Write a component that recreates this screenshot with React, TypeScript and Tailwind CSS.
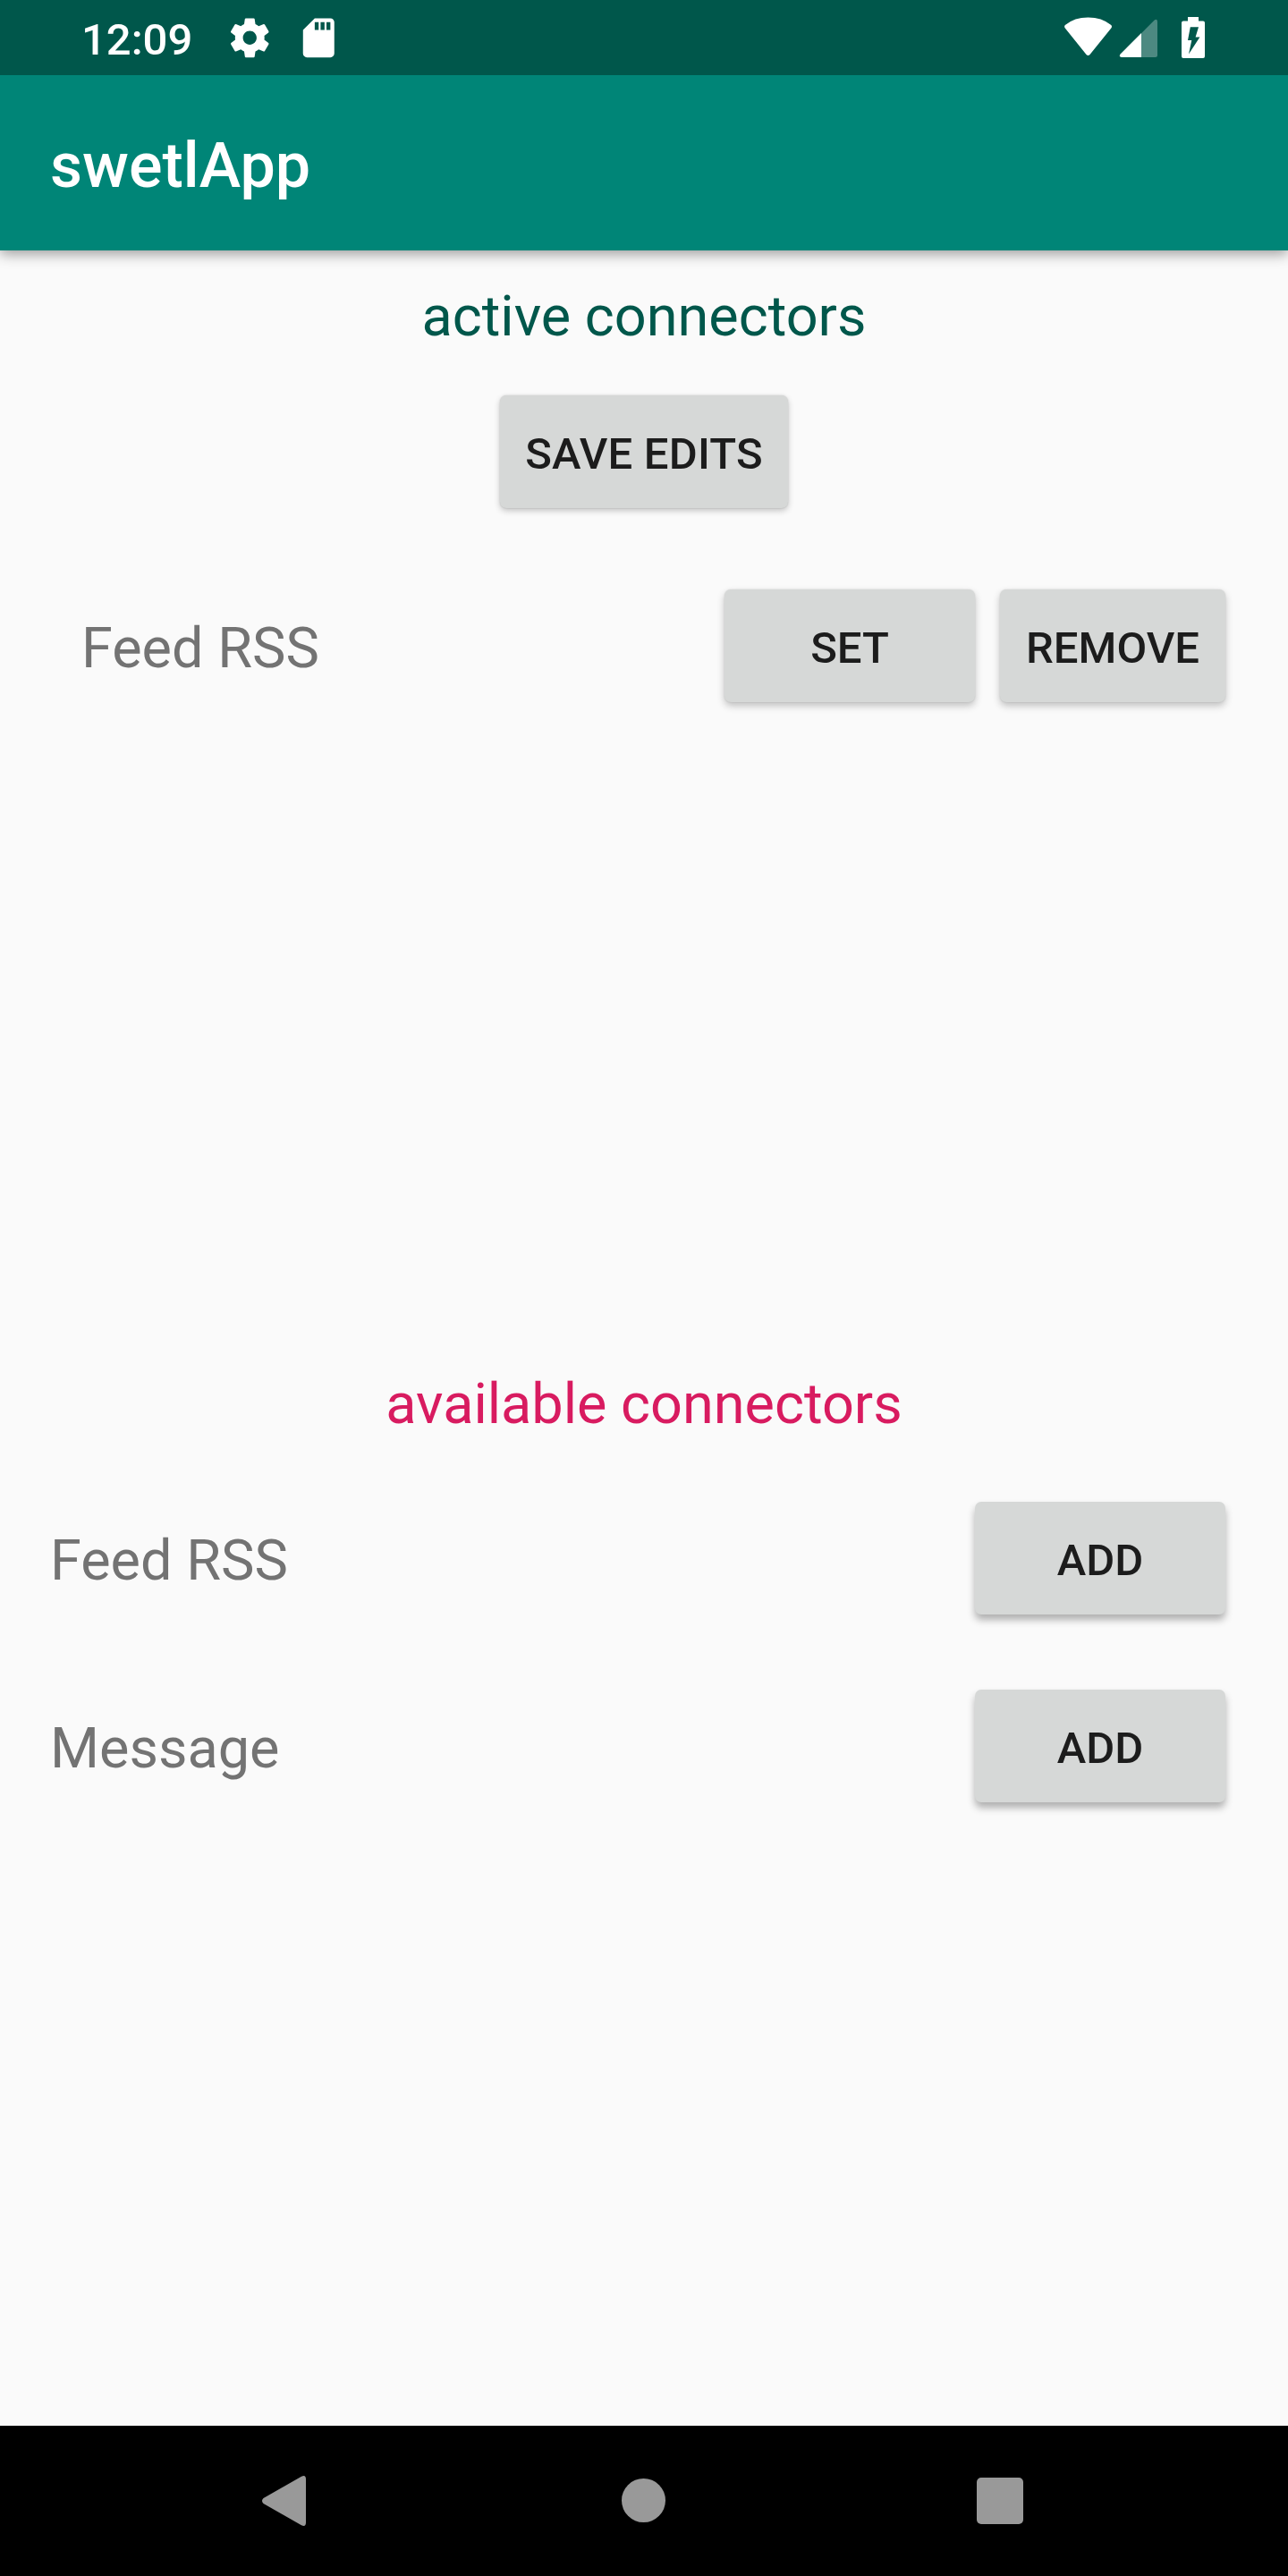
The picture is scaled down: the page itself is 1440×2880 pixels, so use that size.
import React from "react";

function StatusBar() {
  return (
    <header className="relative z-10 flex h-[84px] items-start justify-between bg-[#00574b] text-white">
      <div className="flex h-full items-start">
        <span className="ml-[91px] mt-[16px] w-[126px] whitespace-nowrap text-[49px] font-medium leading-[58px]">12:09</span>
        <svg className="ml-[36px] mt-[16px] size-[52.5px] shrink-0" viewBox="0 0 24 24" fill="currentColor">
          <path d="M19.43 12.98c.04-.32.07-.64.07-.98s-.03-.66-.07-.98l2.11-1.65c.19-.15.24-.42.12-.64l-2-3.46c-.12-.22-.39-.3-.61-.22l-2.49 1c-.52-.4-1.08-.73-1.69-.98l-.38-2.65C14.46 2.18 14.25 2 14 2h-4c-.25 0-.46.18-.49.42l-.38 2.65c-.61.25-1.17.59-1.69.98l-2.49-1c-.23-.09-.49 0-.61.22l-2 3.46c-.13.22-.07.49.12.64l2.11 1.65c-.04.32-.07.65-.07.98s.03.66.07.98l-2.11 1.65c-.19.15-.24.42-.12.64l2 3.46c.12.22.39.3.61.22l2.49-1c.52.4 1.08.73 1.69.98l.38 2.65c.03.24.24.42.49.42h4c.25 0 .46-.18.49-.42l.38-2.65c.61-.25 1.17-.59 1.69-.98l2.49 1c.23.09.49 0 .61-.22l2-3.46c.12-.22.07-.49-.12-.64l-2.11-1.65zM12 15.5c-1.93 0-3.5-1.57-3.5-3.5s1.57-3.5 3.5-3.5 3.5 1.57 3.5 3.5-1.57 3.5-3.5 3.5z" />
        </svg>
        <svg className="ml-[24.5px] mt-[16px] size-[52.5px] shrink-0" viewBox="0 0 24 24" fill="currentColor">
          <path d="M18 2h-8L4.02 8 4 20c0 1.1.9 2 2 2h12c1.1 0 2-.9 2-2V4c0-1.1-.9-2-2-2zm-6 6h-2V4h2v4zm3 0h-2V4h2v4zm3 0h-2V4h2v4z" />
        </svg>
      </div>
      <svg className="mr-[80px] h-[84px] w-[180px]" viewBox="1180 0 180 84" fill="currentColor">
        <path d="M1190.8 31.5Q1189.2 29.4 1191.2 27.8Q1201 19.4 1216.5 19.4T1241.9 27.8Q1243.9 29.4 1242.3 31.5L1218.5 60.9Q1216.5 63 1214.5 60.9Z" />
        <path d="M1290.4 22.8Q1294 20.2 1294 24.5V61.5Q1294 64 1291.5 64H1276V37.2Z" opacity="0.3" />
        <path d="M1276 37V64H1254Q1250.4 63.6 1252.8 60.2Z" />
        <path
          fillRule="evenodd"
          d="M1328 19H1340V23.4H1345Q1347 23.4 1347 25.4V63Q1347 65 1345 65H1323Q1321 65 1321 63V25.4Q1321 23.4 1323 23.4H1328ZM1330.8 30.3L1328 45H1332.3L1329 60.5L1341.4 41.4H1336.6L1340 30.3Z"
        />
      </svg>
    </header>
  );
}

function Button({ label, className }: { label: string; className: string }) {
  return (
    <button
      className={`flex h-[126px] items-center justify-center rounded-[7px] bg-[#d6d8d7] pt-[6px] text-[49px] font-medium leading-[58px] text-[#1c1c1c] ${className}`}
    >
      {label}
    </button>
  );
}

function NavigationBar() {
  return (
    <nav className="flex h-[168px] items-start bg-black">
      <svg className="ml-[293px] mt-[56px] h-[56px] w-[49px]" viewBox="0 0 49 56" fill="#999">
        <path d="M44 .8Q49-1.6 49 4V52Q49 57.6 44 55.2L1.5 31Q-1.5 28 1.5 25Z" />
      </svg>
      <div className="ml-[353px] mt-[59px] size-[49px] rounded-full bg-[#999]" />
      <div className="ml-[347.5px] mt-[57.5px] h-[52.5px] w-[52.5px] rounded-[5px] bg-[#999]" />
    </nav>
  );
}

export default function App() {
  return (
    <div className="flex h-[2880px] w-[1440px] flex-col overflow-hidden bg-[#fafafa] font-['Roboto',sans-serif]">
      <StatusBar />
      <div className="h-[196px] bg-[#008577] pl-[56px] pt-[60px] shadow-[0_4px_14px_rgba(0,0,0,0.38)]">
        <h1 className="text-[70px] font-medium leading-[82px] text-white">swetlApp</h1>
      </div>
      <main className="flex flex-1 flex-col text-[63px] leading-[74px] text-[#737373]">
        <section className="flex h-[1217px] flex-col items-center pt-[37px]">
          <h2 className="text-[#00574b]">active connectors</h2>
          <Button
            label="SAVE EDITS"
            className="mt-[51px] w-[322px] tracking-[0.2px] shadow-[0_0_2px_rgba(0,0,0,0.15),0_3px_7px_rgba(0,0,0,0.22)]"
          />
          <div className="mt-[91px] flex w-full items-center pl-[91px] pr-[70px]">
            <span className="flex-1 pt-[6px]">Feed RSS</span>
            <Button label="SET" className="w-[280px] shadow-[0_0_2px_rgba(0,0,0,0.12),0_4px_8px_rgba(0,0,0,0.24)]" />
            <Button
              label="REMOVE"
              className="ml-[28px] w-[252px] shadow-[0_0_2px_rgba(0,0,0,0.12),0_4px_8px_rgba(0,0,0,0.24)]"
            />
          </div>
        </section>
        <section className="flex flex-1 flex-col pt-[36px]">
          <h2 className="text-center text-[#d81b60]">available connectors</h2>
          <div className="mt-[72px] flex flex-col gap-[84px] pl-[56px] pr-[70px]">
            <div className="flex items-center justify-between">
              <span className="pt-[6px]">Feed RSS</span>
              <Button label="ADD" className="w-[280px] shadow-[0_6px_9px_rgba(0,0,0,0.3)]" />
            </div>
            <div className="flex items-center justify-between">
              <span className="pt-[6px]">Message</span>
              <Button label="ADD" className="w-[280px] shadow-[0_6px_9px_rgba(0,0,0,0.3)]" />
            </div>
          </div>
        </section>
      </main>
      <NavigationBar />
    </div>
  );
}
